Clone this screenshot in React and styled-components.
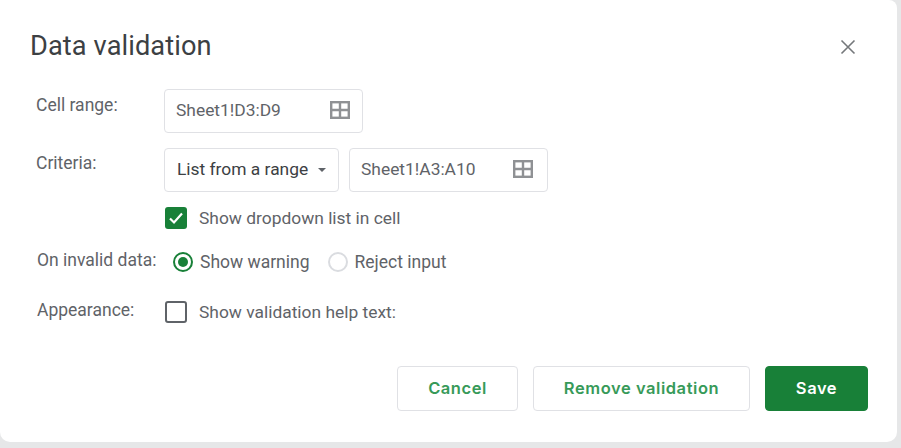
import React from 'react'
import styled, { createGlobalStyle } from 'styled-components'

const GlobalStyle = createGlobalStyle`
  html, body { margin: 0; padding: 0; background: #e6e7e8; }
  body { width: 901px; height: 448px; overflow: hidden; font-family: Roboto, "Liberation Sans", sans-serif; }
`

const Dialog = styled.div`
  width: 897px;
  height: 442px;
  box-sizing: border-box;
  background: #fff;
  border-radius: 0 0 10px 10px;
  border-top-right-radius: 8px;
  padding: 28px 29px 0 30px;
  display: flex;
  flex-direction: column;
`

const Header = styled.header`
  display: flex;
  justify-content: space-between;
  align-items: center;
  height: 34px;
  padding-right: 12px;
`

const Title = styled.h1`
  margin: 2px 0 0;
  font-size: 27.2px;
  font-weight: 400;
  color: #3c4043;
  letter-spacing: 0.1px;
`

const CloseButton = styled.button`
  border: 0;
  padding: 0;
  background: none;
  width: 16px;
  height: 16px;
  color: #75787b;
  display: flex;
  margin-top: 4px;
`

const Form = styled.div`
  display: flex;
  flex-direction: column;
  margin-top: 27px;
  margin-left: 6px;
`

const Row = styled.div`
  display: flex;
  align-items: flex-start;
  margin-top: ${p => p.$top || 0}px;
  padding-left: ${p => p.$indent || 0}px;
`

const Label = styled.label`
  width: ${p => p.$width || 128}px;
  flex: none;
  font-size: 17.5px;
  line-height: 20px;
  color: #5f6368;
  padding-top: ${p => p.$top || 0}px;
  padding-left: ${p => p.$left || 0}px;
  margin-top: ${p => p.$lift || 0}px;
  box-sizing: border-box;
`

const Field = styled.div`
  width: ${p => p.$width}px;
  height: 44px;
  box-sizing: border-box;
  border: 1px solid #e0e1e5;
  border-radius: 4px;
  background: #fff;
  display: flex;
  align-items: center;
  justify-content: space-between;
  padding: 0 ${p => p.$right || 12}px 2px 11px;
  font-size: 17.4px;
  color: #5f6368;
  margin-right: ${p => p.$gap || 0}px;
`

const Select = styled(Field)`
  color: #3c4043;
  padding-left: 12px;
`

const Caret = styled.span`
  width: 0;
  height: 0;
  margin-top: 2px;
  border-left: 4.5px solid transparent;
  border-right: 4.5px solid transparent;
  border-top: 4.5px solid #5f6368;
`

const CheckLine = styled.label`
  display: flex;
  align-items: center;
  height: 22px;
  font-size: 17.4px;
  color: #5f6368;
  gap: 12px;
  margin-left: 1px;
`

const Box = styled.span`
  width: 22px;
  height: 22px;
  box-sizing: border-box;
  border-radius: 3px;
  display: flex;
  align-items: center;
  justify-content: center;
  background: ${p => (p.$checked ? '#188038' : '#fff')};
  border: ${p => (p.$checked ? '0' : '2px solid #5f6368')};
`

const RadioGroup = styled.div`
  display: flex;
  align-items: center;
  height: 22px;
  font-size: 17.5px;
  color: #5f6368;
  margin-left: 9px;
`

const RadioDot = styled.span`
  width: 20px;
  height: 20px;
  box-sizing: border-box;
  border-radius: 50%;
  flex: none;
  border: 2px solid ${p => (p.$checked ? '#188038' : '#dadce0')};
  display: flex;
  align-items: center;
  justify-content: center;
  margin-right: ${p => p.$gap}px;
  &::after {
    content: '';
    width: 10px;
    height: 10px;
    border-radius: 50%;
    background: ${p => (p.$checked ? '#188038' : 'transparent')};
  }
`

const RadioText = styled.span`
  margin-right: ${p => p.$right || 0}px;
`

const Footer = styled.footer`
  display: flex;
  justify-content: flex-end;
  gap: 15px;
  margin-top: 43px;
`

const Button = styled.button`
  width: ${p => p.$width}px;
  height: 45px;
  box-sizing: border-box;
  border-radius: 4px;
  font-family: Inter, Roboto, sans-serif;
  font-size: 16.5px;
  letter-spacing: 0.55px;
  font-weight: 600;
  padding: 0 0 2px;
  border: 1px solid ${p => (p.$primary ? '#188038' : '#e0e1e5')};
  background: ${p => (p.$primary ? '#188038' : '#fff')};
  color: ${p => (p.$primary ? '#fff' : '#379a59')};
`

const RangeIcon = () => (
  <svg width="20" height="18" viewBox="0 0 20 18" fill="none" stroke="#8f9194" strokeWidth="2.4">
    <rect x="1.2" y="1.2" width="17.6" height="15.6" />
    <path d="M10 1v16M1 9h18" />
  </svg>
)

const CloseIcon = () => (
  <svg width="16" height="16" viewBox="0 0 16 16" fill="none" stroke="currentColor" strokeWidth="1.6">
    <path d="M1.5 1.5l13 13M14.5 1.5l-13 13" />
  </svg>
)

const CheckIcon = () => (
  <svg width="16" height="14" viewBox="0 0 16 14" fill="none" stroke="#fff" strokeWidth="2.2">
    <path d="M2 7.5l4 4 8-9" />
  </svg>
)

const App = () => {
  return (
    <>
      <GlobalStyle />
      <Dialog>
        <Header>
          <Title>Data validation</Title>
          <CloseButton aria-label="Close"><CloseIcon /></CloseButton>
        </Header>
        <Form>
          <Row>
            <Label $top={6}>Cell range:</Label>
            <Field $width={199}>Sheet1!D3:D9<RangeIcon /></Field>
          </Row>
          <Row $top={15}>
            <Label $top={5}>Criteria:</Label>
            <Select $width={175} $gap={10} $right={12}>List from a range<Caret /></Select>
            <Field $width={199} $right={14}>Sheet1!A3:A10<RangeIcon /></Field>
          </Row>
          <Row $top={15} $indent={128}>
            <CheckLine><Box $checked><CheckIcon /></Box>Show dropdown list in cell</CheckLine>
          </Row>
          <Row $top={22}>
            <Label $left={1} $lift={-1}>On invalid data:</Label>
            <RadioGroup>
              <RadioDot $checked $gap={7} />
              <RadioText $right={18}>Show warning</RadioText>
              <RadioDot $gap={7} />
              <RadioText>Reject input</RadioText>
            </RadioGroup>
          </Row>
          <Row $top={28}>
            <Label $left={1} $lift={-1}>Appearance:</Label>
            <CheckLine><Box />Show validation help text:</CheckLine>
          </Row>
        </Form>
        <Footer>
          <Button $width={121}>Cancel</Button>
          <Button $width={217}>Remove validation</Button>
          <Button $width={103} $primary>Save</Button>
        </Footer>
      </Dialog>
    </>
  )
}

export default App
